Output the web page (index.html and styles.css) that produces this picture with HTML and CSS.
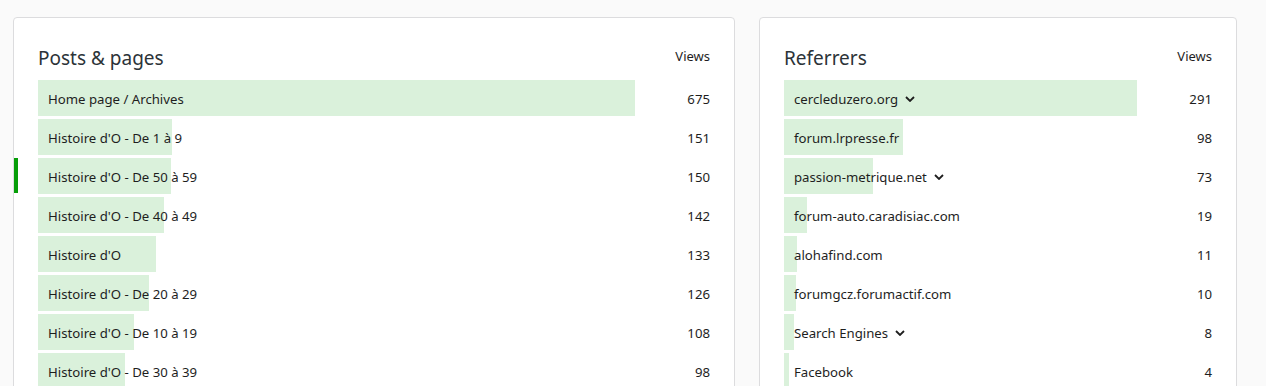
FILE: index.html
```html
<!DOCTYPE html>
<html>
	<head>
		<meta charset="UTF-8">
		<title>Stats</title>
		<link rel="stylesheet" href="styles.css">
	</head>
	<body>
		<div class="stats">
			<section class="card">
				<div class="card-head">
					<h2>Posts &amp; pages</h2>
					<span class="col-title">Views</span>
				</div>
				<ul class="rows">
					<li class="row"><div class="track"><div class="fill" style="width:100%"><span class="label">Home page / Archives</span></div></div><span class="count">675</span></li>
					<li class="row"><div class="track"><div class="fill" style="width:22.37%"><span class="label">Histoire d'O - De 1 à 9</span></div></div><span class="count">151</span></li>
					<li class="row is-current"><div class="track"><div class="fill" style="width:22.22%"><span class="label">Histoire d'O - De 50 à 59</span></div></div><span class="count">150</span></li>
					<li class="row"><div class="track"><div class="fill" style="width:21.04%"><span class="label">Histoire d'O - De 40 à 49</span></div></div><span class="count">142</span></li>
					<li class="row"><div class="track"><div class="fill" style="width:19.70%"><span class="label">Histoire d'O</span></div></div><span class="count">133</span></li>
					<li class="row"><div class="track"><div class="fill" style="width:18.67%"><span class="label">Histoire d'O - De 20 à 29</span></div></div><span class="count">126</span></li>
					<li class="row"><div class="track"><div class="fill" style="width:16.00%"><span class="label">Histoire d'O - De 10 à 19</span></div></div><span class="count">108</span></li>
					<li class="row"><div class="track"><div class="fill" style="width:14.52%"><span class="label">Histoire d'O - De 30 à 39</span></div></div><span class="count">98</span></li>
				</ul>
			</section>
			<section class="card">
				<div class="card-head">
					<h2>Referrers</h2>
					<span class="col-title">Views</span>
				</div>
				<ul class="rows">
					<li class="row"><div class="track"><div class="fill" style="width:100%"><span class="label">cercleduzero.org <svg class="chev" viewBox="0 0 10 6"><path d="M1 1l4 4 4-4"/></svg></span></div></div><span class="count">291</span></li>
					<li class="row"><div class="track"><div class="fill" style="width:33.68%"><span class="label">forum.lrpresse.fr</span></div></div><span class="count">98</span></li>
					<li class="row"><div class="track"><div class="fill" style="width:25.09%"><span class="label">passion-metrique.net <svg class="chev" viewBox="0 0 10 6"><path d="M1 1l4 4 4-4"/></svg></span></div></div><span class="count">73</span></li>
					<li class="row"><div class="track"><div class="fill" style="width:6.53%"><span class="label">forum-auto.caradisiac.com</span></div></div><span class="count">19</span></li>
					<li class="row"><div class="track"><div class="fill" style="width:3.78%"><span class="label">alohafind.com</span></div></div><span class="count">11</span></li>
					<li class="row"><div class="track"><div class="fill" style="width:3.44%"><span class="label">forumgcz.forumactif.com</span></div></div><span class="count">10</span></li>
					<li class="row"><div class="track"><div class="fill" style="width:2.75%"><span class="label">Search Engines <svg class="chev" viewBox="0 0 10 6"><path d="M1 1l4 4 4-4"/></svg></span></div></div><span class="count">8</span></li>
					<li class="row"><div class="track"><div class="fill" style="width:1.37%"><span class="label">Facebook</span></div></div><span class="count">4</span></li>
				</ul>
			</section>
		</div>
	</body>
</html>
```

FILE: styles.css
```css
body {
	margin: 0;
	background: #fafafa;
	font-family: "Noto Sans", sans-serif;
	color: #1e1e1e;
}
.stats {
	display: grid;
	grid-template-columns: 722px 478px;
	gap: 24px;
	padding: 17px 0 0 13px;
}
.card {
	background: #fff;
	border: 1px solid #dcdcde;
	border-radius: 4px;
	padding: 24px 24px 0;
	height: 400px;
}
.card-head {
	display: flex;
	justify-content: space-between;
	align-items: center;
	height: 32px;
	margin-bottom: 6px;
}
h2 {
	margin: 0;
	font-size: 19px;
	font-weight: normal;
	color: #2c3338;
}
.col-title {
	font-size: 13px;
	margin-top: -4px;
}
.rows {
	list-style: none;
	margin: 0;
	padding: 0;
}
.row {
	position: relative;
	display: flex;
	align-items: center;
	height: 36px;
	margin-bottom: 3px;
	font-size: 13.2px;
}
.row.is-current::before {
	content: "";
	position: absolute;
	left: -24px;
	top: 0;
	width: 4px;
	height: 35px;
	background: #069e08;
}
.track {
	flex: 1;
	height: 100%;
}
.fill {
	height: 100%;
	background: #daf1db;
	display: flex;
	align-items: center;
}
.label {
	padding: 2px 0 0 10px;
	white-space: nowrap;
	display: flex;
	align-items: center;
}
.chev {
	width: 10px;
	height: 6px;
	margin-left: 7px;
	fill: none;
	stroke: #1e1e1e;
	stroke-width: 1.8;
}
.count {
	width: 75px;
	padding-top: 2px;
	text-align: right;
}
```
